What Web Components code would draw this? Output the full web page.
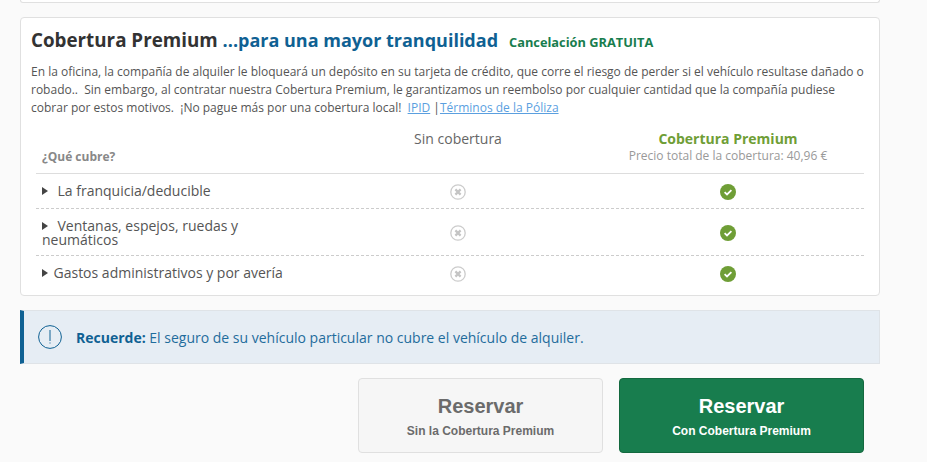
<!DOCTYPE html>
<html lang="es"><head><meta charset="utf-8"><title>Cobertura Premium</title>
<style>
html,body{margin:0;padding:0;background:#fafafa;}
body{font-family:"Open Sans",sans-serif;width:927px;height:462px;overflow:hidden;}
</style></head><body>
<checkout-page>
  <premium-card>
    <coverage-row slot="rows" label="La franquicia/deducible" gap="9.5" style="--h:35px"></coverage-row>
    <coverage-row slot="rows" label="Ventanas, espejos, ruedas y neumáticos" gap="9.5" style="--h:47px;--t:2px"></coverage-row>
    <coverage-row slot="rows" label="Gastos administrativos y por avería" gap="5.5" last style="--h:34px"></coverage-row>
  </premium-card>
  <notice-bar><b>Recuerde:</b> El seguro de su vehículo particular no cubre el vehículo de alquiler.</notice-bar>
  <book-actions>
    <book-button sub="Sin la Cobertura Premium"></book-button>
    <book-button primary sub="Con Cobertura Premium"></book-button>
  </book-actions>
</checkout-page>
<script>
function def(name, html, init){
  customElements.define(name, class extends HTMLElement{
    connectedCallback(){
      if(this.shadowRoot) return;
      const r=this.attachShadow({mode:'open'});
      r.innerHTML=html;
      if(init) init(this,r);
    }
  });
}
def('checkout-page',`<style>
:host{display:flex;flex-direction:column;width:860px;margin-left:20px;}
.top{height:2px;border:1px solid #e0e0e0;border-top:0;border-radius:0 0 4px 4px;background:#fff;margin-bottom:14px;}
</style><div class="top"></div><slot></slot>`);
def('premium-card',`<style>
:host{display:block;box-sizing:border-box;height:279px;background:#fff;border:1px solid #e0e0e0;border-radius:4px;padding:9px 10px 0 10px;}
h2{margin:0;display:flex;align-items:baseline;font-size:18.8px;line-height:27px;font-weight:700;color:#333;white-space:pre;}
h2 .b{color:#0f6193;font-size:18px;}
h2 .g{color:#187d4e;font-size:12.8px;margin-left:11px;}
.p{margin:7px 0 0 0;font-size:12px;line-height:18px;color:#555;}
.p div{white-space:pre;}
a{color:#5b9fdf;text-decoration:underline;}
.tbl{margin:12px 5px 0 5px;}
.head{display:grid;grid-template-columns:286px 272px 268px 2px;height:45px;box-sizing:border-box;border-bottom:1px solid #ddd;}
.q{font-size:12px;font-weight:700;color:#888;padding:19px 0 0 6px;line-height:18px;}
.c{text-align:center;}
.c1{font-size:14px;color:#666;line-height:19px;}
.c2 b{display:block;font-size:14px;line-height:19px;color:#6f9e36;}
.c2 span{display:block;font-size:12px;line-height:15px;color:#999;}
</style>
<h2>Cobertura Premium <span class="b">...para una mayor tranquilidad</span><span class="g">Cancelación GRATUITA</span></h2>
<div class="p"><div>En la oficina, la compañía de alquiler le bloqueará un depósito en su tarjeta de crédito, que corre el riesgo de perder si el vehículo resultase dañado o</div><div>robado..&nbsp; Sin embargo, al contratar nuestra Cobertura Premium, le garantizamos un reembolso por cualquier cantidad que la compañía pudiese</div><div>cobrar por estos motivos.&nbsp; ¡No pague más por una cobertura local!&nbsp; <a href="#">IPID</a> |<a href="#">Términos de la Póliza</a></div></div>
<div class="tbl">
<div class="head"><div class="q">¿Qué cubre?</div><div class="c c1">Sin cobertura</div><div class="c c2"><b>Cobertura Premium</b><span>Precio total de la cobertura: 40,96 €</span></div></div>
<slot name="rows"></slot>
</div>`);
def('coverage-row',`<style>
:host{display:grid;grid-template-columns:286px 272px 268px 2px;align-items:center;box-sizing:border-box;height:var(--h);border-bottom:1px dashed #ccc;}
:host([last]){border-bottom:0;}
.l{font-size:14px;line-height:14px;color:#555;padding-left:6px;padding-top:var(--t,0);width:245px;box-sizing:content-box;}
.a{display:inline-block;width:0;height:0;border-left:6px solid #444;border-top:4px solid transparent;border-bottom:4px solid transparent;vertical-align:1.5px;}
.m{display:flex;justify-content:center;}
svg{display:block;margin-top:1px;}
</style>
<div class="l"><span class="a"></span><span class="s"></span><span class="t"></span></div>
<div class="m"><svg width="16" height="16" viewBox="0 0 16 16"><circle cx="8" cy="8" r="7.2" fill="#fff" stroke="#ccc" stroke-width="1.3"/><path d="M5.4 5.4l5.2 5.2M10.6 5.4l-5.2 5.2" stroke="#c4c4c4" stroke-width="2.2" fill="none"/></svg></div>
<div class="m"><svg width="16" height="16" viewBox="0 0 16 16"><circle cx="8" cy="8" r="8" fill="#6f9e36"/><path d="M4.6 8.2l2.4 2.2 4.4-4.2" stroke="#fff" stroke-width="1.8" fill="none"/></svg></div>`,
(h,r)=>{r.querySelector('.t').textContent=h.getAttribute('label');r.querySelector('.s').style.cssText='display:inline-block;width:'+h.getAttribute('gap')+'px';});
def('notice-bar',`<style>
:host{display:flex;align-items:center;box-sizing:border-box;height:54px;margin-top:14px;background:#e6edf4;border:1px solid #dfe3e7;border-left:4px solid #0f6193;padding-left:14px;color:#1f6c9c;font-size:14px;}
svg{flex:none;margin-right:14px;}
::slotted(b){color:#0f6193;font-weight:700;}
</style><svg width="24" height="24" viewBox="0 0 24 24"><circle cx="12" cy="12" r="11.4" fill="none" stroke="#0f6193" stroke-width="1"/><path d="M12 5v11M12 17.5v1" stroke="#0f6193" stroke-width="1" fill="none"/></svg><span><slot></slot></span>`);
def('book-actions',`<style>
:host{display:flex;justify-content:flex-end;gap:16px;margin-top:14px;padding-right:16px;}
</style><slot></slot>`);
def('book-button',`<style>
:host{display:flex;flex-direction:column;align-items:center;box-sizing:border-box;width:245px;height:75px;border-radius:4px;border:1px solid #e0e0e0;background:#f6f6f6;color:#6b6b6b;font-family:"Liberation Sans",Arial,sans-serif;font-weight:700;padding-top:15px;}
:host([primary]){background:#187d4e;border-color:#14693f;color:#fff;}
.a{font-size:20px;line-height:24px;}
.b{font-size:12px;line-height:16px;margin-top:5px;}
</style><div class="a">Reservar</div><div class="b"></div>`,(h,r)=>{r.querySelector('.b').textContent=h.getAttribute('sub');});
</script>
</body></html>
